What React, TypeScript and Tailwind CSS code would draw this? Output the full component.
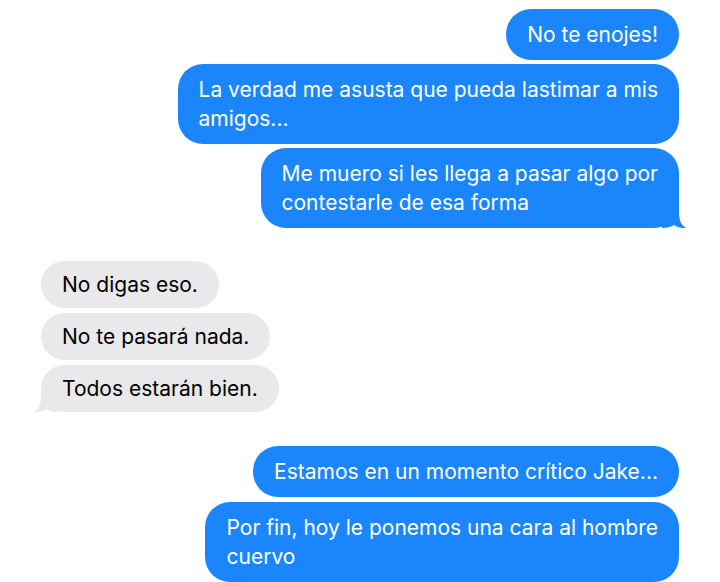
const blue = [
  { lines: ["No te enojes!"] },
  { lines: ["La verdad me asusta que pueda lastimar a mis", "amigos..."] },
  { lines: ["Me muero si les llega a pasar algo por", "contestarle de esa forma"], tail: true },
];

const gray = [
  { lines: ["No digas eso."] },
  { lines: ["No te pasará nada."] },
  { lines: ["Todos estarán bien."], tail: true },
];

const blue2 = [
  { lines: ["Estamos en un momento crítico Jake..."] },
  { lines: ["Por fin, hoy le ponemos una cara al hombre", "cuervo"] },
];

function Text({ lines }: { lines: string[] }) {
  return (
    <>
      {lines.map((l, i) => (
        <span key={i} className="block whitespace-nowrap">
          {l}
        </span>
      ))}
    </>
  );
}

function Sent({ lines, tail }: { lines: string[]; tail?: boolean }) {
  return (
    <div className="relative self-end rounded-[25px] bg-[#1b86fb] px-[21px] py-[11px] text-white">
      <Text lines={lines} />
      {tail && (
        <svg className="absolute -right-[7px] bottom-0" width="24" height="26" viewBox="0 0 24 26">
          <path d="M0 0 L17 0 L17 10 C17 18 19 23 24 26 C19 26.5 15 25 12 23 C9 25 5 26 0 26 Z" fill="#1b86fb" />
        </svg>
      )}
    </div>
  );
}

function Received({ lines, tail }: { lines: string[]; tail?: boolean }) {
  return (
    <div className="relative self-start rounded-[24px] bg-[#e9e9eb] px-[21px] py-[9px] text-black">
      <Text lines={lines} />
      {tail && (
        <svg className="absolute -left-[7px] bottom-0" width="24" height="26" viewBox="0 0 24 26">
          <path d="M24 0 L7 0 L7 10 C7 18 5 23 0 26 C5 26.5 9 25 12 23 C15 25 19 26 24 26 Z" fill="#e9e9eb" />
        </svg>
      )}
    </div>
  );
}

export default function App() {
  return (
    <div
      className="flex h-[582px] w-[720px] flex-col overflow-hidden bg-white px-[41px] pt-[9px] text-[21px] leading-[29px]"
      style={{ fontFamily: "Inter, 'Liberation Sans', sans-serif" }}
    >
      <div className="flex flex-col gap-[4px]">
        {blue.map((m, i) => (
          <Sent key={i} {...m} />
        ))}
      </div>
      <div className="mt-[33px] flex flex-col gap-[5px]">
        {gray.map((m, i) => (
          <Received key={i} {...m} />
        ))}
      </div>
      <div className="mt-[34px] flex flex-col gap-[5px]">
        {blue2.map((m, i) => (
          <Sent key={i} {...m} />
        ))}
      </div>
    </div>
  );
}
